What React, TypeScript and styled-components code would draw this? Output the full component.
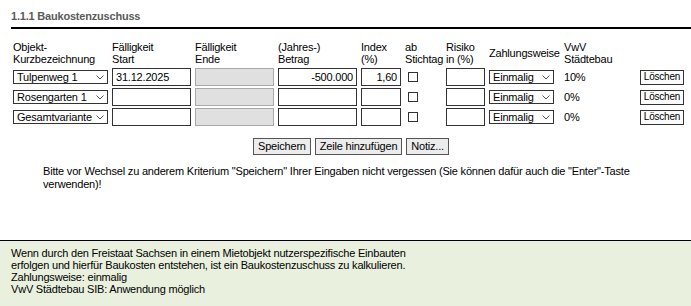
import { Fragment } from 'react';
import styled, { createGlobalStyle } from 'styled-components';

const GlobalStyle = createGlobalStyle`
  html, body {
    margin: 0;
    padding: 0;
    background: #ffffff;
  }
  body {
    font-family: "Liberation Sans", Arial, sans-serif;
    font-size: 11px;
    letter-spacing: -0.2px;
    color: #000000;
  }
`;

const Page = styled.div`
  min-height    : 306px;
  width         : 691px;
  display       : flex;
  flex-direction: column;
  overflow      : hidden;
`;

const Section = styled.section`
  padding-left: 11px;
`;

const Title = styled.h3`
  margin       : 0;
  padding      : 10px 0 4px 0;
  font-size    : 11px;
  line-height  : 13px;
  font-weight  : bold;
  color        : #5a5a5a;
  border-bottom: 2px solid #000000;
`;

const Grid = styled.div`
  margin-top : 12px;
  margin-left: 2px;
  display    : grid;
  grid-template-columns: 95px 79px 79px 79px 40px 37px 39px 71px 72px 45px;
  column-gap : 4px;
  row-gap    : 2px;
  align-items: center;
`;

const Head = styled.div`
  line-height  : 12px;
  white-space  : nowrap;
  margin-bottom: 1px;
`;

const Field = styled.input<{ $right?: boolean }>`
  box-sizing : border-box;
  height     : 18px;
  width      : 100%;
  margin     : 0;
  padding    : 0 3px;
  border     : 1px solid #333333;
  border-radius: 0;
  background : #ffffff;
  font-family: inherit;
  font-size  : 11px;
  letter-spacing: inherit;
  color      : #000000;
  text-align : ${(p) => (p.$right ? 'right' : 'left')};
  outline    : none;

  &:disabled {
    background: #e0e0e0;
    border-color: #a9a9a9;
  }
`;

const SelectWrap = styled.div<{ $w: number }>`
  position: relative;
  width   : ${(p) => p.$w}px;
  height  : 14px;
`;

const Select = styled.select`
  appearance : none;
  box-sizing : border-box;
  width      : 100%;
  height     : 14px;
  margin     : 0;
  padding    : 0 12px 0 3px;
  border     : 1px solid #333333;
  border-radius: 0;
  background : #ffffff;
  font-family: inherit;
  font-size  : 11px;
  letter-spacing: inherit;
  line-height: 12px;
  color      : #000000;
  outline    : none;
`;

const ChevronIcon = styled.svg`
  position      : absolute;
  right         : 4px;
  top           : 5px;
  pointer-events: none;
`;

const Check = styled.input`
  appearance: none;
  box-sizing: border-box;
  width     : 10px;
  height    : 10px;
  margin    : 0 0 0 3px;
  border    : 1px solid #333333;
  background: #ffffff;
`;

const Percent = styled.span`
  line-height: 14px;
`;

const SmallButton = styled.button`
  box-sizing : border-box;
  justify-self: start;
  width      : 44px;
  height     : 15px;
  padding    : 0;
  border     : 1px solid #333333;
  border-radius: 0;
  background : #fbfbfb;
  font-family: inherit;
  font-size  : 10px;
  letter-spacing: -0.2px;
  line-height: 12px;
  color      : #000000;
`;

const Actions = styled.div`
  margin-top     : 12px;
  display        : flex;
  justify-content: center;
  column-gap     : 4px;
`;

const Button = styled.button`
  box-sizing : border-box;
  height     : 17px;
  padding    : 0 4px;
  border     : 1px solid #555555;
  border-radius: 0;
  background : #ececec;
  font-family: inherit;
  font-size  : 11px;
  letter-spacing: inherit;
  line-height: 13px;
  color      : #000000;
`;

const Note = styled.p`
  margin     : 10px 0 0 32px;
  width      : 600px;
  line-height: 13px;
`;

const InfoBox = styled.div`
  margin-top : auto;
  height     : 66px;
  box-sizing : border-box;
  padding    : 6px 11px;
  border-top : 1px solid #000000;
  background : #e9f1de;
`;

const InfoText = styled.p`
  margin     : 0;
  width      : 420px;
  line-height: 12px;
`;

const Chevron = () => (
  <ChevronIcon width="8" height="5" viewBox="0 0 8 5">
    <path d="M0.5 0.5 L4 4 L7.5 0.5" fill="none" stroke="#555555" strokeWidth="1" />
  </ChevronIcon>
);

type DropProps = { width: number; value: string; options: string[] };

const Drop = ({ width, value, options }: DropProps) => (
  <SelectWrap $w={width}>
    <Select defaultValue={value}>
      {options.map((o) => (
        <option key={o}>{o}</option>
      ))}
    </Select>
    <Chevron />
  </SelectWrap>
);

type Row = {
  objekt : string;
  start  : string;
  betrag : string;
  index  : string;
  vwv    : string;
};

const objekte = ['Tulpenweg 1', 'Rosengarten 1', 'Gesamtvariante'];

const rows: Row[] = [
  { objekt: 'Tulpenweg 1',    start: '31.12.2025', betrag: '-500.000', index: '1,60', vwv: '10%' },
  { objekt: 'Rosengarten 1',  start: '',           betrag: '',         index: '',     vwv: '0%'  },
  { objekt: 'Gesamtvariante', start: '',           betrag: '',         index: '',     vwv: '0%'  },
];

const heads = [
  ['Objekt-', 'Kurzbezeichnung'],
  ['Fälligkeit', 'Start'],
  ['Fälligkeit', 'Ende'],
  ['(Jahres-)', 'Betrag'],
  ['Index', '(%)'],
  ['ab', 'Stichtag'],
  ['Risiko', 'in (%)'],
  ['Zahlungsweise'],
  ['VwV', 'Städtebau'],
  [],
];

export default function App() {
  return (
    <>
      <GlobalStyle />
      <Page>
        <Section>
          <Title>1.1.1 Baukostenzuschuss</Title>
          <Grid>
            {heads.map((h, i) => (
              <Head key={i}>
                {h.map((line, j) => (
                  <div key={j}>{line}</div>
                ))}
              </Head>
            ))}
            {rows.map((r) => (
              <Fragment key={r.objekt}>
                <Drop width={95} value={r.objekt} options={objekte} />
                <Field defaultValue={r.start} />
                <Field disabled />
                <Field $right defaultValue={r.betrag} />
                <Field $right defaultValue={r.index} />
                <Check type="checkbox" />
                <Field />
                <Drop width={65} value="Einmalig" options={['Einmalig', 'Jährlich']} />
                <Percent>{r.vwv}</Percent>
                <SmallButton>Löschen</SmallButton>
              </Fragment>
            ))}
          </Grid>
          <Actions>
            <Button>Speichern</Button>
            <Button>Zeile hinzufügen</Button>
            <Button>Notiz...</Button>
          </Actions>
          <Note>
            Bitte vor Wechsel zu anderem Kriterium "Speichern" Ihrer Eingaben nicht vergessen (Sie können dafür auch die "Enter"-Taste verwenden)!
          </Note>
        </Section>
        <InfoBox>
          <InfoText>
            Wenn durch den Freistaat Sachsen in einem Mietobjekt nutzerspezifische Einbauten erfolgen und hierfür Baukosten entstehen, ist ein Baukostenzuschuss zu kalkulieren.
            <br />
            Zahlungsweise: einmalig
            <br />
            VwV Städtebau SIB: Anwendung möglich
          </InfoText>
        </InfoBox>
      </Page>
    </>
  );
}
